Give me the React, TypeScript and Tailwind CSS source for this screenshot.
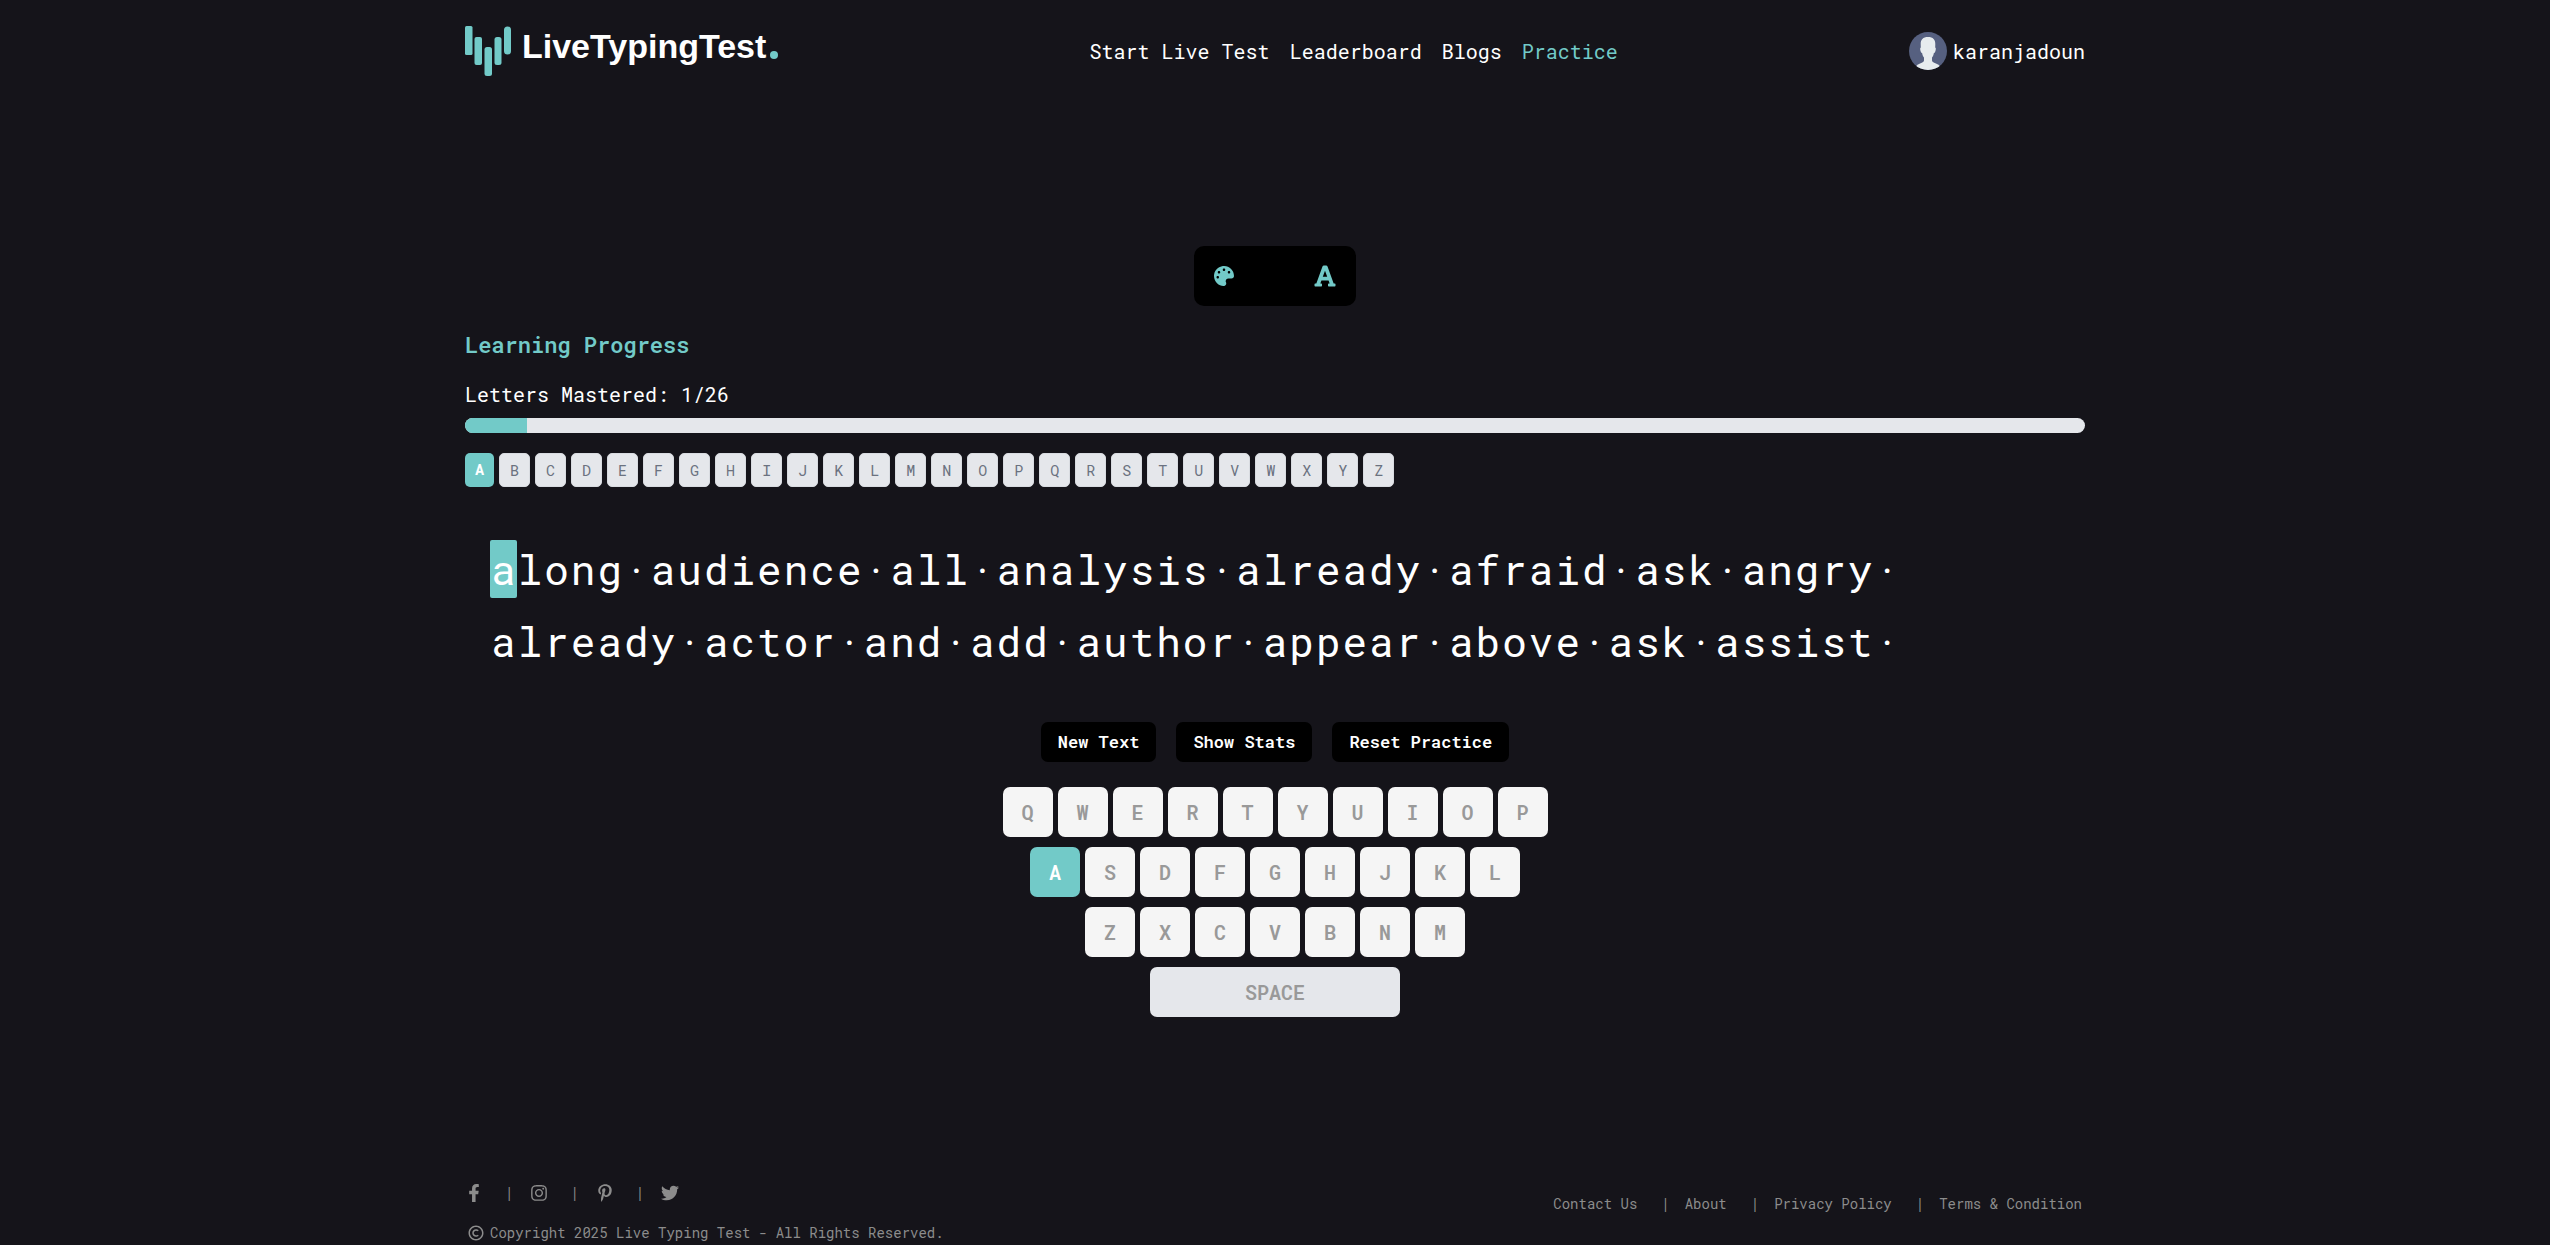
import { BiCopyright } from "react-icons/bi";
import {
  FaFacebookF,
  FaFont,
  FaInstagram,
  FaPalette,
  FaPinterestP,
  FaTwitter,
} from "react-icons/fa";

const LETTERS = "ABCDEFGHIJKLMNOPQRSTUVWXYZ".split("");
const MASTERED = ["A"];
const KEY_ROWS = ["QWERTYUIOP", "ASDFGHJKL", "ZXCVBNM"];
const LINES = [
  "along audience all analysis already afraid ask angry ",
  "already actor and add author appear above ask assist ",
];

const NAV_LINKS = [
  { label: "Start Live Test", active: false },
  { label: "Leaderboard", active: false },
  { label: "Blogs", active: false },
  { label: "Practice", active: true },
];

const SOCIALS = [
  { label: "Facebook", icon: <FaFacebookF /> },
  { label: "Instagram", icon: <FaInstagram /> },
  { label: "Pinterest", icon: <FaPinterestP /> },
  { label: "Twitter", icon: <FaTwitter /> },
];

const FOOTER_LINKS = ["Contact Us", "About", "Privacy Policy", "Terms & Condition"];

const Logo = () => (
  <a href="#" className="flex items-start pr-5">
    <svg width="47" height="50" viewBox="0 0 47 50" fill="#72cac8" aria-hidden="true">
      <rect x="0" y="0" width="7.5" height="29" rx="1.5" />
      <rect x="9.5" y="11" width="7.5" height="28" rx="2" />
      <rect x="19.5" y="21" width="7.5" height="29" rx="2.5" />
      <rect x="29.5" y="11" width="7" height="28" rx="2.5" />
      <rect x="39" y="0.5" width="7" height="28" rx="3.5" />
    </svg>
    <span className="ml-2.5 font-[Liberation_Sans,Arial,sans-serif] text-[34px] leading-10 font-bold text-white">
      LiveTypingTest
    </span>
    <span className="mt-[25px] ml-1 size-2 rounded-full bg-[#72cac8]" />
  </a>
);

const Avatar = () => (
  <svg width="38" height="38" viewBox="0 0 38 38" aria-hidden="true">
    <defs>
      <clipPath id="avatar">
        <circle cx="19" cy="19" r="19" />
      </clipPath>
    </defs>
    <g clipPath="url(#avatar)">
      <rect width="38" height="38" fill="#566080" />
      <path
        fill="#e7ecee"
        d="M19 5c-5 0-7.5 2.500-7.300 7.500l.1 3c-1 .2-.7 2.500.1 4.500.4.800.800 1 1.200 1 .4 2 1 3.500 1.900 4.500v3c0 1.500-2 2.200-4.500 3.200C8 32.700 6.500 34 6 38h26c-.5-4-2-5.300-4.500-6.300-2.500-1-4.500-1.700-4.500-3.200v-3c.9-1 1.500-2.500 1.900-4.500.4 0 .8-.2 1.200-1 .8-2 1.100-4.300.1-4.500l.1-3C26.500 7.500 24 5 19 5z"
      />
    </g>
  </svg>
);

const Header = () => (
  <header className="flex items-start justify-between pt-[26px]">
    <Logo />
    <nav className="flex gap-5 pt-[9px] text-xl leading-8">
      {NAV_LINKS.map((link) => (
        <a
          key={link.label}
          href="#"
          className={link.active ? "text-[#72cac8]" : "text-white"}
        >
          {link.label}
        </a>
      ))}
    </nav>
    <a href="#" className="flex items-center gap-1.5 pt-1.5 text-xl text-white">
      <Avatar />
      karanjadoun
    </a>
  </header>
);

const Toolbox = () => (
  <div className="mx-auto flex h-15 w-[162px] items-center justify-between rounded-[10px] bg-black pr-[19px] pl-5 text-[#72cac8]">
    <button type="button" aria-label="Theme" className="text-xl">
      <FaPalette />
    </button>
    <button type="button" aria-label="Font" className="text-2xl">
      <FaFont />
    </button>
  </div>
);

const Progress = () => (
  <section className="mt-[25px]">
    <h2 className="text-[22px] leading-7 font-semibold text-[#72cac8]">
      Learning Progress
    </h2>
    <p className="mt-[21px] text-xl leading-7 text-white">
      Letters Mastered: {MASTERED.length}/{LETTERS.length}
    </p>
    <div className="mt-2.5 h-[15px] overflow-hidden rounded-full bg-[#e5e7eb]">
      <div
        className="h-full bg-[#72cac8]"
        style={{ width: `${(MASTERED.length / LETTERS.length) * 100}%` }}
      />
    </div>
    <ul className="mt-5 flex flex-wrap gap-[5px] text-[15px] leading-[22px]">
      {LETTERS.map((letter) => (
        <li
          key={letter}
          className={
            MASTERED.includes(letter)
              ? "rounded-[5px] bg-[#72cac8] px-2.5 py-[5px] font-bold text-white"
              : "rounded-[5px] border border-[#d8dbe0] bg-[#e5e7eb] px-2.5 py-[5px] text-[#6b7280]"
          }
        >
          {letter}
        </li>
      ))}
    </ul>
  </section>
);

const TypingText = () => (
  <div className="mt-[46px] px-[25px] text-[41px] leading-[72px] text-white">
    {LINES.map((line, row) => (
      <p key={line}>
        {line.split("").map((char, i) => (
          <span
            key={i}
            className={
              row === 0 && i === 0
                ? "rounded-xs bg-[#72cac8] px-px py-[2px]"
                : "px-px"
            }
          >
            {char === " " ? "·" : char}
          </span>
        ))}
      </p>
    ))}
  </div>
);

const Actions = () => (
  <div className="mt-[45px] flex justify-center gap-5">
    {["New Text", "Show Stats", "Reset Practice"].map((label) => (
      <button
        key={label}
        type="button"
        className="h-10 rounded-[7px] bg-black px-[17px] text-[17px] font-semibold text-white"
      >
        {label}
      </button>
    ))}
  </div>
);

const Keyboard = () => (
  <div className="mt-[25px] flex flex-col items-center gap-2.5 text-xl font-semibold text-[#999]">
    {KEY_ROWS.map((row) => (
      <div key={row} className="flex gap-[5px]">
        {row.split("").map((key) => (
          <button
            key={key}
            type="button"
            className={
              key === "A"
                ? "size-[50px] rounded-[7px] bg-[#72cac8] text-white"
                : "size-[50px] rounded-[7px] bg-[#f5f5f5]"
            }
          >
            {key}
          </button>
        ))}
      </div>
    ))}
    <button type="button" className="h-[50px] w-[250px] rounded-[7px] bg-[#e5e7eb]">
      SPACE
    </button>
  </div>
);

const Footer = () => (
  <footer className="mt-auto flex items-start justify-between text-sm text-[#8c8c8c]">
    <div>
      <ul className="flex h-6 items-center">
        {SOCIALS.map((social, i) => (
          <li key={social.label} className="flex items-center">
            {i > 0 && <span className="mr-[17px] ml-[22px]">|</span>}
            <a href="#" aria-label={social.label} className="text-lg">
              {social.icon}
            </a>
          </li>
        ))}
      </ul>
      <p className="mt-4 flex items-center gap-[5px] pl-[2px] leading-6">
        <BiCopyright className="text-lg" />
        Copyright 2025 Live Typing Test - All Rights Reserved.
      </p>
    </div>
    <ul className="flex pt-[11px] pr-[3px] leading-6">
      {FOOTER_LINKS.map((label, i) => (
        <li key={label}>
          {i > 0 && <span className="mr-[15px] ml-6">|</span>}
          <a href="#">{label}</a>
        </li>
      ))}
    </ul>
  </footer>
);

const App = () => {
  return (
    <div className="min-h-screen bg-[#15141a] px-6 font-[Roboto_Mono,Liberation_Mono,monospace]">
      <div className="mx-auto flex min-h-screen max-w-[1620px] flex-col">
        <Header />
        <main className="pt-[170px] pb-10">
          <Toolbox />
          <Progress />
          <TypingText />
          <Actions />
          <Keyboard />
        </main>
        <Footer />
      </div>
    </div>
  );
};

export default App;
